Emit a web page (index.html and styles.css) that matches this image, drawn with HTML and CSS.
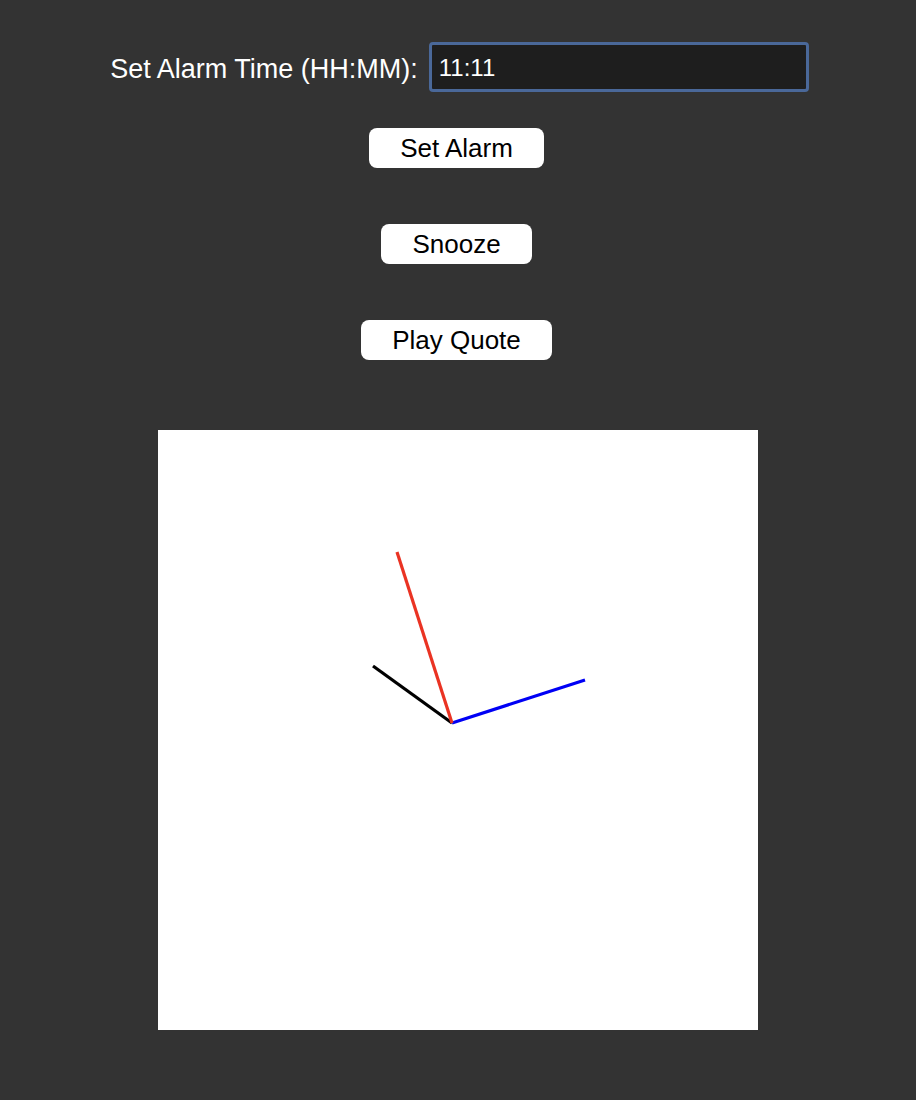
FILE: index.html
```html
<!DOCTYPE html>
<html>
<head>
<meta charset="utf-8">
<title>Alarm Clock</title>
<link rel="stylesheet" href="styles.css">
</head>
<body>
<div class="app">
  <div class="time-row">
    <label class="time-label" for="alarm">Set Alarm Time (HH:MM):</label>
    <input id="alarm" class="time-input" type="text" value="11:11">
  </div>
  <button class="btn">Set Alarm</button>
  <button class="btn">Snooze</button>
  <button class="btn">Play Quote</button>
  <div class="clock">
    <svg width="600" height="600" viewBox="0 0 600 600">
      <line x1="294" y1="293" x2="215" y2="236" stroke="#000000" stroke-width="3.2"/>
      <line x1="294" y1="293" x2="427" y2="250" stroke="#0000f5" stroke-width="3.2"/>
      <line x1="294" y1="293" x2="239" y2="122" stroke="#ea3323" stroke-width="3.2"/>
    </svg>
  </div>
</div>
</body>
</html>
```

FILE: styles.css
```css
html, body {
  margin: 0;
  padding: 0;
  background: #333333;
}
body {
  font-family: "Liberation Sans", Arial, sans-serif;
}
.app {
  display: flex;
  flex-direction: column;
  align-items: center;
  padding-top: 42px;
}
.time-row {
  display: flex;
  align-items: center;
  gap: 11px;
  margin-left: 3px;
}
.time-label {
  color: #ffffff;
  font-size: 27px;
  padding-top: 4px;
}
.time-input {
  box-sizing: border-box;
  width: 380px;
  height: 50px;
  border: 3px solid #4a6899;
  border-radius: 4px;
  background: #1e1e1e;
  color: #ffffff;
  font-family: "Liberation Sans", Arial, sans-serif;
  font-size: 24px;
  padding: 2px 7px 0;
  outline: none;
}
.btn {
  box-sizing: border-box;
  height: 40px;
  margin-top: 36px;
  margin-right: 3px;
  padding: 0 31px;
  border: none;
  border-radius: 8px;
  background: #ffffff;
  color: #000000;
  font-family: "Liberation Sans", Arial, sans-serif;
  font-size: 26px;
  line-height: 40px;
}
.btn + .btn {
  margin-top: 56px;
}
.clock {
  margin-top: 70px;
  width: 600px;
  height: 600px;
  background: #ffffff;
}
.clock svg {
  display: block;
}
```
